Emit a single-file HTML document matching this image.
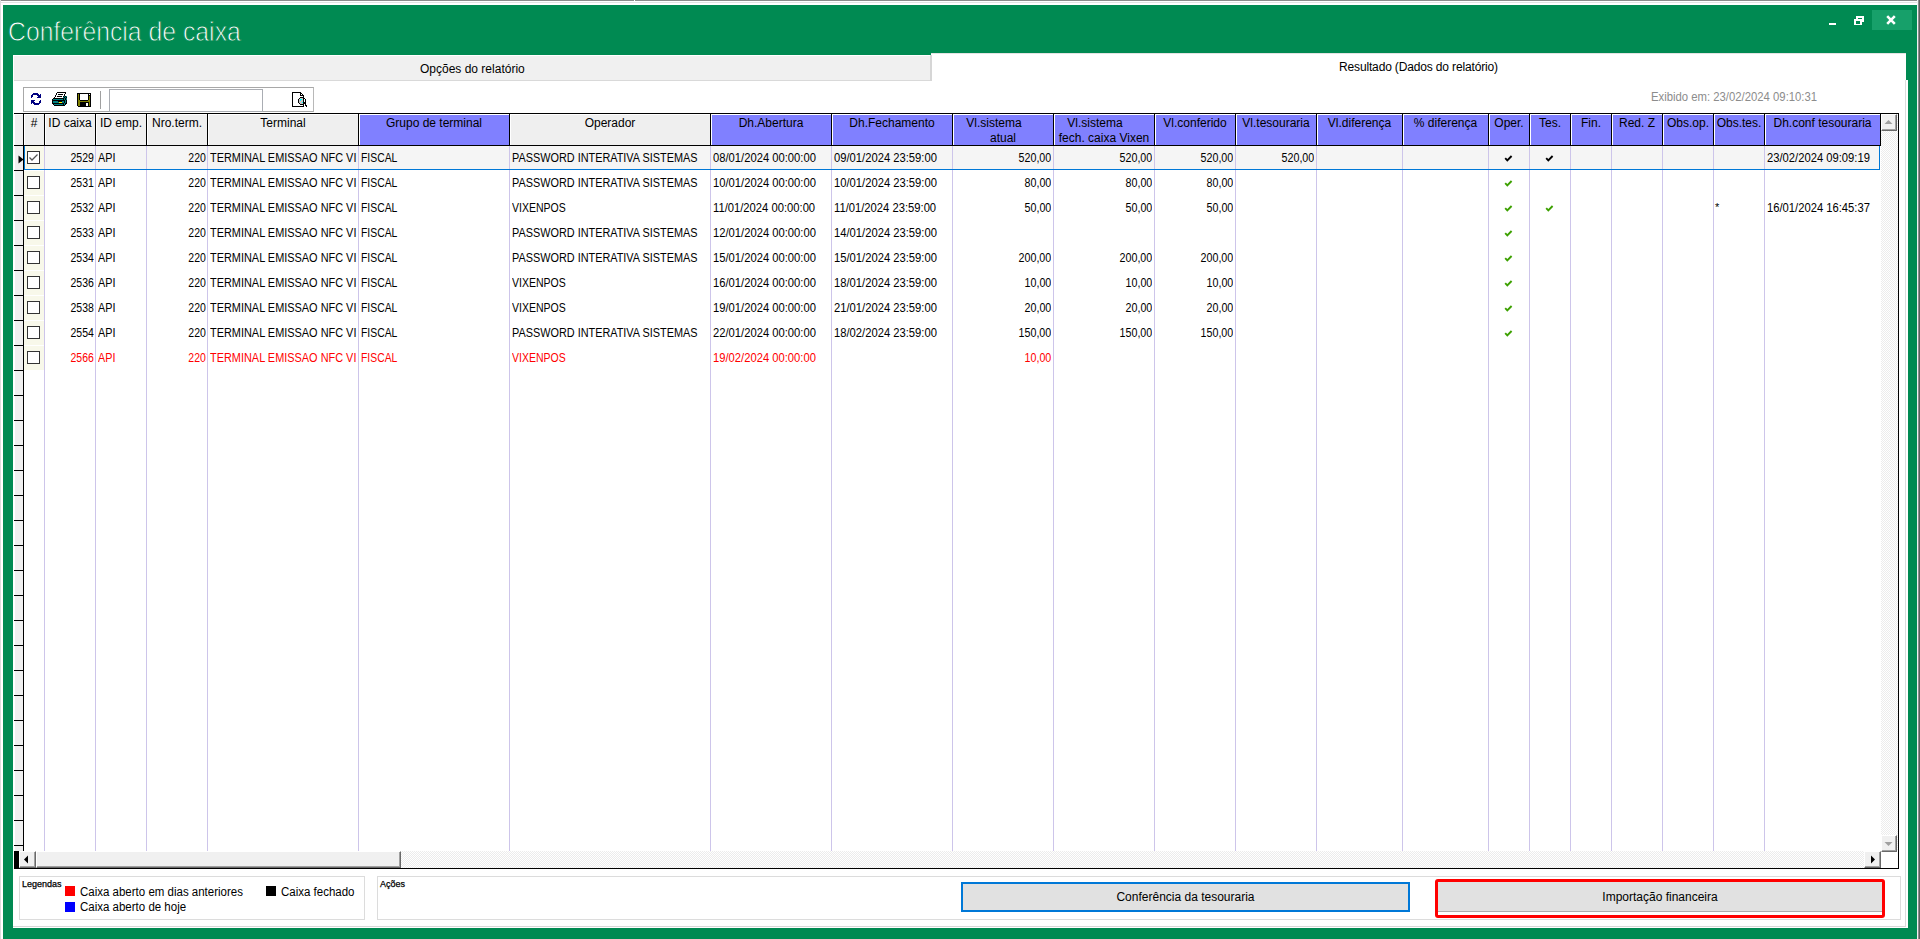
<!DOCTYPE html>
<html><head><meta charset="utf-8"><title>Conferência de caixa</title>
<style>
*{margin:0;padding:0;box-sizing:border-box}
html,body{width:1920px;height:939px;overflow:hidden;background:#fff;font-family:"Liberation Sans", sans-serif;}
.a{position:absolute}
.t{position:absolute;white-space:nowrap;font-size:12px;line-height:14px;color:#000}
.d{position:absolute;white-space:nowrap;font-size:12.5px;line-height:14px;color:#000;transform-origin:0 0}
.dr{position:absolute;white-space:nowrap;font-size:12.5px;line-height:14px;color:#000;transform-origin:100% 0}
.red{color:#f00}
.hd{position:absolute;white-space:nowrap;font-size:12px;line-height:15px;color:#000;text-align:center}
.dith{background-color:#fff;background-image:linear-gradient(45deg,#ececec 25%,transparent 25%,transparent 75%,#ececec 75%),linear-gradient(45deg,#ececec 25%,transparent 25%,transparent 75%,#ececec 75%);background-size:2px 2px;background-position:0 0,1px 1px}
</style></head>
<body>
<div class="a" style="left:0px;top:0px;width:1920px;height:1px;background:#8c8c8c;"></div>
<div class="a" style="left:634px;top:0px;width:1px;height:1px;background:#fff;"></div>
<div class="a" style="left:0px;top:2px;width:1920px;height:1px;background:#e4e4e4;"></div>
<div class="a" style="left:0px;top:0px;width:1px;height:939px;background:#dcdcdc;"></div>
<div class="a" style="left:3px;top:5px;width:1914px;height:934px;background:#008a52;"></div>
<div class="a" style="left:1917px;top:0px;width:1px;height:939px;background:#f2f2f2;"></div>
<div class="a" style="left:1918px;top:0px;width:1px;height:939px;background:#8f8f8f;"></div>
<div class="a" style="left:1919px;top:0px;width:1px;height:939px;background:#5f5f5f;"></div>
<div class="t" style="left:8px;top:14px;font-size:28px;line-height:36px;color:#fff;transform:scaleX(0.885);transform-origin:0 0;-webkit-text-stroke:0.9px #008a52">Conferência de caixa</div>
<div class="a" style="left:1872px;top:10px;width:40px;height:20px;background:#17a06a;"></div>
<svg class="a" style="left:1820px;top:10px" width="100" height="24" viewBox="0 0 100 24" shape-rendering="crispEdges"><rect x="9" y="13" width="7" height="2" fill="#fff"/><rect x="36" y="6" width="8" height="6" fill="#fff"/><rect x="38" y="8" width="4" height="1" fill="#008a52"/><rect x="34" y="9" width="8" height="6" fill="#fff"/><rect x="36" y="11" width="4" height="3" fill="#008a52"/></svg>
<svg class="a" style="left:1886px;top:15px" width="10" height="10" viewBox="0 0 10 10"><path d="M1.2 1.2 L8.8 8.8 M8.8 1.2 L1.2 8.8" stroke="#fff" stroke-width="2.6"/></svg>
<div class="a" style="left:931px;top:53px;width:975px;height:28px;background:#fff;"></div>
<div class="a" style="left:13px;top:80px;width:1895px;height:848px;background:#fff;"></div>
<div class="a" style="left:1905px;top:80px;width:1px;height:847px;background:#dcdcdc;"></div>
<div class="a" style="left:13px;top:926px;width:1893px;height:1px;background:#d8d8d8;"></div>
<div class="a" style="left:13px;top:55px;width:918px;height:26px;background:#f0f0f0;border-top:1px solid #fff;border-left:1px solid #fff"></div>
<div class="a" style="left:14px;top:80px;width:917px;height:1px;background:#d9d9d9;"></div>
<div class="a" style="left:930px;top:55px;width:2px;height:26px;background:#d6d6d6;"></div>
<div class="a" style="left:931px;top:53px;width:975px;height:1px;background:#e3e3e3;"></div>
<div class="t" style="left:420px;top:62px">Opções do relatório</div>
<div class="t" style="left:1339px;top:60px;letter-spacing:-0.15px">Resultado (Dados do relatório)</div>
<div class="a" style="left:23px;top:87px;width:291px;height:25px;background:#fff;border:1px solid #a8a8a8;border-right:1px solid #b8b8b8"></div>
<div class="a" style="left:100px;top:91px;width:1px;height:18px;background:#a0a0a0;"></div>
<div class="a" style="left:109px;top:89px;width:154px;height:23px;background:#fff;border:1px solid #aaadb3"></div>
<svg class="a" style="left:28px;top:90px" width="14" height="15" viewBox="0 0 14 15" shape-rendering="crispEdges"><path d="M5 3h5v1h-5zM4 4h7v1h-7zM12 4h1v1h-1zM3 5h2v1h-2zM9 5h4v1h-4zM3 6h2v1h-2zM10 6h3v1h-3zM3 7h1v1h-1zM9 7h4v1h-4zM3 10h4v1h-4zM12 10h1v1h-1zM3 11h3v1h-3zM11 11h2v1h-2zM3 12h4v1h-4zM11 12h2v1h-2zM3 13h1v1h-1zM5 13h7v1h-7zM6 14h5v1h-5z" fill="#000080"/></svg>
<svg class="a" style="left:50px;top:89px" width="18" height="17" viewBox="0 0 18 17" shape-rendering="crispEdges"><path d="M7 3h9v1h-9zM6 4h1v1h-1zM15 4h1v1h-1zM6 5h1v1h-1zM8 5h5v1h-5zM14 5h1v1h-1zM5 6h1v1h-1zM14 6h1v1h-1zM5 7h1v1h-1zM7 7h5v1h-5zM13 7h1v1h-1zM15 7h1v1h-1zM4 8h1v1h-1zM14 8h1v1h-1zM16 8h1v1h-1zM3 9h11v1h-11zM15 9h1v1h-1zM2 10h1v1h-1zM13 10h1v1h-1zM15 10h1v1h-1zM2 11h13v1h-13zM16 11h1v1h-1zM2 12h1v1h-1zM8 12h4v1h-4zM14 12h1v1h-1zM16 12h1v1h-1zM2 13h1v1h-1zM14 13h1v1h-1zM16 13h1v1h-1zM2 14h12v1h-12zM15 14h2v1h-2zM3 15h1v1h-1zM13 15h1v1h-1zM15 15h1v1h-1zM4 16h11v1h-11z" fill="#000"/><path d="M7 4h8v1h-8zM7 5h1v1h-1zM13 5h1v1h-1zM6 6h8v1h-8zM6 7h1v1h-1zM12 7h1v1h-1zM5 8h8v1h-8z" fill="#fff"/><path d="M14 7h1v1h-1zM16 7h1v1h-1zM13 8h1v1h-1zM15 8h1v1h-1zM14 9h1v1h-1zM16 9h1v1h-1zM3 10h10v1h-10zM14 10h1v1h-1zM16 10h1v1h-1zM15 11h1v1h-1zM3 12h5v1h-5zM12 12h2v1h-2zM15 12h1v1h-1zM3 13h6v1h-6zM12 13h2v1h-2zM15 13h1v1h-1zM14 14h1v1h-1zM4 15h9v1h-9zM14 15h1v1h-1z" fill="#008080"/><path d="M9 13h3v1h-3z" fill="#ffff00"/></svg>
<svg class="a" style="left:74px;top:90px" width="18" height="17" viewBox="0 0 18 17" shape-rendering="crispEdges"><path d="M3 3h14v1h-14zM3 4h1v1h-1zM5 4h1v1h-1zM14 4h1v1h-1zM16 4h1v1h-1zM3 5h1v1h-1zM5 5h1v1h-1zM14 5h3v1h-3zM3 6h1v1h-1zM5 6h1v1h-1zM14 6h1v1h-1zM16 6h1v1h-1zM3 7h1v1h-1zM5 7h1v1h-1zM14 7h1v1h-1zM16 7h1v1h-1zM3 8h1v1h-1zM5 8h1v1h-1zM14 8h1v1h-1zM16 8h1v1h-1zM3 9h1v1h-1zM5 9h1v1h-1zM14 9h1v1h-1zM16 9h1v1h-1zM3 10h1v1h-1zM6 10h8v1h-8zM16 10h1v1h-1zM3 11h1v1h-1zM16 11h1v1h-1zM3 12h1v1h-1zM6 12h9v1h-9zM16 12h1v1h-1zM3 13h1v1h-1zM6 13h6v1h-6zM14 13h1v1h-1zM16 13h1v1h-1zM3 14h1v1h-1zM6 14h6v1h-6zM14 14h1v1h-1zM16 14h1v1h-1zM3 15h1v1h-1zM6 15h6v1h-6zM14 15h1v1h-1zM16 15h1v1h-1zM4 16h13v1h-13z" fill="#000"/><path d="M4 4h1v1h-1zM4 5h1v1h-1zM4 6h1v1h-1zM15 6h1v1h-1zM4 7h1v1h-1zM15 7h1v1h-1zM4 8h1v1h-1zM15 8h1v1h-1zM4 9h1v1h-1zM15 9h1v1h-1zM4 10h2v1h-2zM14 10h2v1h-2zM4 11h12v1h-12zM4 12h2v1h-2zM15 12h1v1h-1zM4 13h2v1h-2zM15 13h1v1h-1zM4 14h2v1h-2zM15 14h1v1h-1zM4 15h2v1h-2zM15 15h1v1h-1z" fill="#808000"/><path d="M6 4h8v1h-8zM15 4h1v1h-1zM6 5h8v1h-8zM6 6h8v1h-8zM6 7h8v1h-8zM6 8h8v1h-8zM6 9h8v1h-8zM12 13h2v1h-2zM12 14h2v1h-2zM12 15h2v1h-2z" fill="#fff"/></svg>
<svg class="a" style="left:290px;top:90px" width="18" height="17" viewBox="0 0 18 17" shape-rendering="crispEdges"><path d="M2 2h9v1h-9zM2 3h1v1h-1zM10 3h2v1h-2zM2 4h1v1h-1zM10 4h1v1h-1zM12 4h1v1h-1zM2 5h1v1h-1zM10 5h4v1h-4zM2 6h1v1h-1zM13 6h1v1h-1zM2 7h1v1h-1zM10 7h4v1h-4zM2 8h1v1h-1zM9 8h1v1h-1zM13 8h2v1h-2zM2 9h1v1h-1zM8 9h1v1h-1zM13 9h1v1h-1zM15 9h1v1h-1zM2 10h1v1h-1zM8 10h1v1h-1zM13 10h1v1h-1zM15 10h1v1h-1zM2 11h1v1h-1zM8 11h1v1h-1zM13 11h1v1h-1zM15 11h1v1h-1zM2 12h1v1h-1zM8 12h1v1h-1zM13 12h3v1h-3zM2 13h1v1h-1zM9 13h1v1h-1zM13 13h3v1h-3zM2 14h1v1h-1zM10 14h4v1h-4zM15 14h1v1h-1zM2 15h1v1h-1zM13 15h1v1h-1zM15 15h2v1h-2zM2 16h12v1h-12zM16 16h1v1h-1z" fill="#000"/><path d="M3 3h7v1h-7zM3 4h7v1h-7zM11 4h1v1h-1zM3 5h7v1h-7zM3 6h10v1h-10zM3 7h7v1h-7zM3 8h6v1h-6zM3 9h5v1h-5zM14 9h1v1h-1zM3 10h5v1h-5zM14 10h1v1h-1zM3 11h5v1h-5zM14 11h1v1h-1zM3 12h5v1h-5zM3 13h6v1h-6zM3 14h7v1h-7zM3 15h10v1h-10z" fill="#fff"/><path d="M10 8h3v1h-3zM9 9h1v1h-1zM12 9h1v1h-1zM9 10h1v1h-1zM11 10h2v1h-2zM9 11h4v1h-4zM9 12h3v1h-3zM10 13h3v1h-3z" fill="#c8c8c8"/><path d="M10 9h2v1h-2zM10 10h1v1h-1zM12 12h1v1h-1z" fill="#00ffff"/></svg>
<div class="t" style="left:1651px;top:90px;color:#8c8c8c;transform:scaleX(0.943);transform-origin:0 0">Exibido em: 23/02/2024 09:10:31</div>
<div class="a" style="left:14px;top:113px;width:1885px;height:1px;background:#000;"></div>
<div class="a" style="left:14px;top:114px;width:9px;height:31px;background:#efefef;border-top:1px solid #fff;border-left:1px solid #fff"></div>
<div class="a" style="left:23px;top:113px;width:1px;height:738px;background:#000;"></div>
<div class="a" style="left:24px;top:114px;width:20px;height:31px;background:#efefef;border-top:1px solid #fff;border-left:1px solid #fff"></div>
<div class="a" style="left:44px;top:113px;width:1px;height:33px;background:#000;"></div>
<div class="hd" style="left:4px;top:116px;width:60px">#</div>
<div class="a" style="left:45px;top:114px;width:50px;height:31px;background:#efefef;border-top:1px solid #fff;border-left:1px solid #fff"></div>
<div class="a" style="left:95px;top:113px;width:1px;height:33px;background:#000;"></div>
<div class="hd" style="left:25px;top:116px;width:90px">ID caixa</div>
<div class="a" style="left:96px;top:114px;width:50px;height:31px;background:#efefef;border-top:1px solid #fff;border-left:1px solid #fff"></div>
<div class="a" style="left:146px;top:113px;width:1px;height:33px;background:#000;"></div>
<div class="hd" style="left:76px;top:116px;width:90px">ID emp.</div>
<div class="a" style="left:147px;top:114px;width:60px;height:31px;background:#efefef;border-top:1px solid #fff;border-left:1px solid #fff"></div>
<div class="a" style="left:207px;top:113px;width:1px;height:33px;background:#000;"></div>
<div class="hd" style="left:127px;top:116px;width:100px">Nro.term.</div>
<div class="a" style="left:208px;top:114px;width:150px;height:31px;background:#efefef;border-top:1px solid #fff;border-left:1px solid #fff"></div>
<div class="a" style="left:358px;top:113px;width:1px;height:33px;background:#000;"></div>
<div class="hd" style="left:188px;top:116px;width:190px">Terminal</div>
<div class="a" style="left:359px;top:114px;width:150px;height:31px;background:#8080ff;border-top:1px solid #fff;border-left:1px solid #fff"></div>
<div class="a" style="left:509px;top:113px;width:1px;height:33px;background:#000;"></div>
<div class="hd" style="left:339px;top:116px;width:190px">Grupo de terminal</div>
<div class="a" style="left:510px;top:114px;width:200px;height:31px;background:#efefef;border-top:1px solid #fff;border-left:1px solid #fff"></div>
<div class="a" style="left:710px;top:113px;width:1px;height:33px;background:#000;"></div>
<div class="hd" style="left:490px;top:116px;width:240px">Operador</div>
<div class="a" style="left:711px;top:114px;width:120px;height:31px;background:#8080ff;border-top:1px solid #fff;border-left:1px solid #fff"></div>
<div class="a" style="left:831px;top:113px;width:1px;height:33px;background:#000;"></div>
<div class="hd" style="left:691px;top:116px;width:160px">Dh.Abertura</div>
<div class="a" style="left:832px;top:114px;width:120px;height:31px;background:#8080ff;border-top:1px solid #fff;border-left:1px solid #fff"></div>
<div class="a" style="left:952px;top:113px;width:1px;height:33px;background:#000;"></div>
<div class="hd" style="left:812px;top:116px;width:160px">Dh.Fechamento</div>
<div class="a" style="left:953px;top:114px;width:100px;height:31px;background:#8080ff;border-top:1px solid #fff;border-left:1px solid #fff"></div>
<div class="a" style="left:1053px;top:113px;width:1px;height:33px;background:#000;"></div>
<div class="hd" style="left:924px;top:116px;width:140px">Vl.sistema</div>
<div class="hd" style="left:933px;top:131px;width:140px">atual</div>
<div class="a" style="left:1054px;top:114px;width:100px;height:31px;background:#8080ff;border-top:1px solid #fff;border-left:1px solid #fff"></div>
<div class="a" style="left:1154px;top:113px;width:1px;height:33px;background:#000;"></div>
<div class="hd" style="left:1025px;top:116px;width:140px">Vl.sistema</div>
<div class="hd" style="left:1034px;top:131px;width:140px">fech. caixa Vixen</div>
<div class="a" style="left:1155px;top:114px;width:80px;height:31px;background:#8080ff;border-top:1px solid #fff;border-left:1px solid #fff"></div>
<div class="a" style="left:1235px;top:113px;width:1px;height:33px;background:#000;"></div>
<div class="hd" style="left:1135px;top:116px;width:120px">Vl.conferido</div>
<div class="a" style="left:1236px;top:114px;width:80px;height:31px;background:#8080ff;border-top:1px solid #fff;border-left:1px solid #fff"></div>
<div class="a" style="left:1316px;top:113px;width:1px;height:33px;background:#000;"></div>
<div class="hd" style="left:1216px;top:116px;width:120px">Vl.tesouraria</div>
<div class="a" style="left:1317px;top:114px;width:85px;height:31px;background:#8080ff;border-top:1px solid #fff;border-left:1px solid #fff"></div>
<div class="a" style="left:1402px;top:113px;width:1px;height:33px;background:#000;"></div>
<div class="hd" style="left:1297px;top:116px;width:125px">Vl.diferença</div>
<div class="a" style="left:1403px;top:114px;width:85px;height:31px;background:#8080ff;border-top:1px solid #fff;border-left:1px solid #fff"></div>
<div class="a" style="left:1488px;top:113px;width:1px;height:33px;background:#000;"></div>
<div class="hd" style="left:1383px;top:116px;width:125px">% diferença</div>
<div class="a" style="left:1489px;top:114px;width:40px;height:31px;background:#8080ff;border-top:1px solid #fff;border-left:1px solid #fff"></div>
<div class="a" style="left:1529px;top:113px;width:1px;height:33px;background:#000;"></div>
<div class="hd" style="left:1469px;top:116px;width:80px">Oper.</div>
<div class="a" style="left:1530px;top:114px;width:40px;height:31px;background:#8080ff;border-top:1px solid #fff;border-left:1px solid #fff"></div>
<div class="a" style="left:1570px;top:113px;width:1px;height:33px;background:#000;"></div>
<div class="hd" style="left:1510px;top:116px;width:80px">Tes.</div>
<div class="a" style="left:1571px;top:114px;width:40px;height:31px;background:#8080ff;border-top:1px solid #fff;border-left:1px solid #fff"></div>
<div class="a" style="left:1611px;top:113px;width:1px;height:33px;background:#000;"></div>
<div class="hd" style="left:1551px;top:116px;width:80px">Fin.</div>
<div class="a" style="left:1612px;top:114px;width:50px;height:31px;background:#8080ff;border-top:1px solid #fff;border-left:1px solid #fff"></div>
<div class="a" style="left:1662px;top:113px;width:1px;height:33px;background:#000;"></div>
<div class="hd" style="left:1592px;top:116px;width:90px">Red. Z</div>
<div class="a" style="left:1663px;top:114px;width:50px;height:31px;background:#8080ff;border-top:1px solid #fff;border-left:1px solid #fff"></div>
<div class="a" style="left:1713px;top:113px;width:1px;height:33px;background:#000;"></div>
<div class="hd" style="left:1643px;top:116px;width:90px">Obs.op.</div>
<div class="a" style="left:1714px;top:114px;width:50px;height:31px;background:#8080ff;border-top:1px solid #fff;border-left:1px solid #fff"></div>
<div class="a" style="left:1764px;top:113px;width:1px;height:33px;background:#000;"></div>
<div class="hd" style="left:1694px;top:116px;width:90px">Obs.tes.</div>
<div class="a" style="left:1765px;top:114px;width:115px;height:31px;background:#8080ff;border-top:1px solid #fff;border-left:1px solid #fff"></div>
<div class="a" style="left:1880px;top:113px;width:1px;height:33px;background:#000;"></div>
<div class="hd" style="left:1745px;top:116px;width:155px">Dh.conf tesouraria</div>
<div class="a" style="left:14px;top:145px;width:1867px;height:1px;background:#000;"></div>
<div class="a" style="left:15px;top:146px;width:8px;height:705px;background:#efefef;"></div>
<div class="a" style="left:14px;top:170px;width:9px;height:1px;background:#000;"></div>
<div class="a" style="left:14px;top:195px;width:9px;height:1px;background:#000;"></div>
<div class="a" style="left:14px;top:220px;width:9px;height:1px;background:#000;"></div>
<div class="a" style="left:14px;top:245px;width:9px;height:1px;background:#000;"></div>
<div class="a" style="left:14px;top:270px;width:9px;height:1px;background:#000;"></div>
<div class="a" style="left:14px;top:295px;width:9px;height:1px;background:#000;"></div>
<div class="a" style="left:14px;top:320px;width:9px;height:1px;background:#000;"></div>
<div class="a" style="left:14px;top:345px;width:9px;height:1px;background:#000;"></div>
<div class="a" style="left:14px;top:370px;width:9px;height:1px;background:#000;"></div>
<div class="a" style="left:14px;top:395px;width:9px;height:1px;background:#000;"></div>
<div class="a" style="left:14px;top:420px;width:9px;height:1px;background:#000;"></div>
<div class="a" style="left:14px;top:445px;width:9px;height:1px;background:#000;"></div>
<div class="a" style="left:14px;top:470px;width:9px;height:1px;background:#000;"></div>
<div class="a" style="left:14px;top:495px;width:9px;height:1px;background:#000;"></div>
<div class="a" style="left:14px;top:520px;width:9px;height:1px;background:#000;"></div>
<div class="a" style="left:14px;top:545px;width:9px;height:1px;background:#000;"></div>
<div class="a" style="left:14px;top:570px;width:9px;height:1px;background:#000;"></div>
<div class="a" style="left:14px;top:595px;width:9px;height:1px;background:#000;"></div>
<div class="a" style="left:14px;top:620px;width:9px;height:1px;background:#000;"></div>
<div class="a" style="left:14px;top:645px;width:9px;height:1px;background:#000;"></div>
<div class="a" style="left:14px;top:670px;width:9px;height:1px;background:#000;"></div>
<div class="a" style="left:14px;top:695px;width:9px;height:1px;background:#000;"></div>
<div class="a" style="left:14px;top:720px;width:9px;height:1px;background:#000;"></div>
<div class="a" style="left:14px;top:745px;width:9px;height:1px;background:#000;"></div>
<div class="a" style="left:14px;top:770px;width:9px;height:1px;background:#000;"></div>
<div class="a" style="left:14px;top:795px;width:9px;height:1px;background:#000;"></div>
<div class="a" style="left:14px;top:820px;width:9px;height:1px;background:#000;"></div>
<div class="a" style="left:14px;top:845px;width:9px;height:1px;background:#000;"></div>
<div class="a" style="left:24px;top:146px;width:1856px;height:24px;background:#f5f5f5;"></div>
<div class="a" style="left:44px;top:146px;width:1px;height:705px;background:#cdc5ea;"></div>
<div class="a" style="left:95px;top:146px;width:1px;height:705px;background:#cdc5ea;"></div>
<div class="a" style="left:146px;top:146px;width:1px;height:705px;background:#cdc5ea;"></div>
<div class="a" style="left:207px;top:146px;width:1px;height:705px;background:#cdc5ea;"></div>
<div class="a" style="left:358px;top:146px;width:1px;height:705px;background:#cdc5ea;"></div>
<div class="a" style="left:509px;top:146px;width:1px;height:705px;background:#cdc5ea;"></div>
<div class="a" style="left:710px;top:146px;width:1px;height:705px;background:#cdc5ea;"></div>
<div class="a" style="left:831px;top:146px;width:1px;height:705px;background:#cdc5ea;"></div>
<div class="a" style="left:952px;top:146px;width:1px;height:705px;background:#cdc5ea;"></div>
<div class="a" style="left:1053px;top:146px;width:1px;height:705px;background:#cdc5ea;"></div>
<div class="a" style="left:1154px;top:146px;width:1px;height:705px;background:#cdc5ea;"></div>
<div class="a" style="left:1235px;top:146px;width:1px;height:705px;background:#cdc5ea;"></div>
<div class="a" style="left:1316px;top:146px;width:1px;height:705px;background:#cdc5ea;"></div>
<div class="a" style="left:1402px;top:146px;width:1px;height:705px;background:#cdc5ea;"></div>
<div class="a" style="left:1488px;top:146px;width:1px;height:705px;background:#cdc5ea;"></div>
<div class="a" style="left:1529px;top:146px;width:1px;height:705px;background:#cdc5ea;"></div>
<div class="a" style="left:1570px;top:146px;width:1px;height:705px;background:#cdc5ea;"></div>
<div class="a" style="left:1611px;top:146px;width:1px;height:705px;background:#cdc5ea;"></div>
<div class="a" style="left:1662px;top:146px;width:1px;height:705px;background:#cdc5ea;"></div>
<div class="a" style="left:1713px;top:146px;width:1px;height:705px;background:#cdc5ea;"></div>
<div class="a" style="left:1764px;top:146px;width:1px;height:705px;background:#cdc5ea;"></div>
<div class="a" style="left:24px;top:146px;width:20px;height:24px;background:#f8f8ea;"></div>
<div class="a" style="left:27px;top:151px;width:13px;height:13px;border:1px solid #333;background:#fff"></div>
<svg class="a" style="left:27px;top:151px" width="13" height="13" viewBox="0 0 13 13"><path d="M2.5 6.5 L5 9 L10.5 3.5" fill="none" stroke="#555" stroke-width="1.3"/></svg>
<div class="a" style="left:45px;top:146px;width:49px;height:24px;overflow:hidden"><div class="dr " style="right:0;top:5px;transform:scaleX(0.8400)">2529</div></div>
<div class="a" style="left:96px;top:146px;width:50px;height:24px;overflow:hidden"><div class="d " style="left:2px;top:5px;transform:scaleX(0.8640)">API</div></div>
<div class="a" style="left:147px;top:146px;width:59px;height:24px;overflow:hidden"><div class="dr " style="right:0;top:5px;transform:scaleX(0.8400)">220</div></div>
<div class="a" style="left:208px;top:146px;width:150px;height:24px;overflow:hidden"><div class="d " style="left:2px;top:5px;transform:scaleX(0.8736)">TERMINAL EMISSAO NFC VI</div></div>
<div class="a" style="left:359px;top:146px;width:150px;height:24px;overflow:hidden"><div class="d " style="left:2px;top:5px;transform:scaleX(0.8304)">FISCAL</div></div>
<div class="a" style="left:510px;top:146px;width:200px;height:24px;overflow:hidden"><div class="d " style="left:2px;top:5px;transform:scaleX(0.8698)">PASSWORD INTERATIVA SISTEMAS</div></div>
<div class="a" style="left:711px;top:146px;width:120px;height:24px;overflow:hidden"><div class="d " style="left:2px;top:5px;transform:scaleX(0.8976)">08/01/2024 00:00:00</div></div>
<div class="a" style="left:832px;top:146px;width:120px;height:24px;overflow:hidden"><div class="d " style="left:2px;top:5px;transform:scaleX(0.8976)">09/01/2024 23:59:00</div></div>
<div class="a" style="left:953px;top:146px;width:98px;height:24px;overflow:hidden"><div class="dr " style="right:0;top:5px;transform:scaleX(0.8544)">520,00</div></div>
<div class="a" style="left:1054px;top:146px;width:98px;height:24px;overflow:hidden"><div class="dr " style="right:0;top:5px;transform:scaleX(0.8544)">520,00</div></div>
<div class="a" style="left:1155px;top:146px;width:78px;height:24px;overflow:hidden"><div class="dr " style="right:0;top:5px;transform:scaleX(0.8544)">520,00</div></div>
<div class="a" style="left:1236px;top:146px;width:78px;height:24px;overflow:hidden"><div class="dr " style="right:0;top:5px;transform:scaleX(0.8544)">520,00</div></div>
<svg class="a" style="left:1504px;top:155px" width="9" height="7" viewBox="0 0 9 7"><path d="M1.2 3.2 L3.3 5.3 L7.6 1" fill="none" stroke="#000" stroke-width="1.9"/></svg>
<svg class="a" style="left:1545px;top:155px" width="9" height="7" viewBox="0 0 9 7"><path d="M1.2 3.2 L3.3 5.3 L7.6 1" fill="none" stroke="#000" stroke-width="1.9"/></svg>
<div class="a" style="left:1765px;top:146px;width:115px;height:24px;overflow:hidden"><div class="d " style="left:2px;top:5px;transform:scaleX(0.8976)">23/02/2024 09:09:19</div></div>
<div class="a" style="left:24px;top:146px;width:1px;height:24px;background:#0078d7;"></div>
<div class="a" style="left:24px;top:169px;width:1856px;height:1px;background:#0078d7;"></div>
<div class="a" style="left:1879px;top:146px;width:1px;height:24px;background:#0078d7;"></div>
<div class="a" style="left:24px;top:171px;width:20px;height:24px;background:#f8f8ea;"></div>
<div class="a" style="left:27px;top:176px;width:13px;height:13px;border:1px solid #333;background:#fff"></div>
<div class="a" style="left:45px;top:171px;width:49px;height:24px;overflow:hidden"><div class="dr " style="right:0;top:5px;transform:scaleX(0.8400)">2531</div></div>
<div class="a" style="left:96px;top:171px;width:50px;height:24px;overflow:hidden"><div class="d " style="left:2px;top:5px;transform:scaleX(0.8640)">API</div></div>
<div class="a" style="left:147px;top:171px;width:59px;height:24px;overflow:hidden"><div class="dr " style="right:0;top:5px;transform:scaleX(0.8400)">220</div></div>
<div class="a" style="left:208px;top:171px;width:150px;height:24px;overflow:hidden"><div class="d " style="left:2px;top:5px;transform:scaleX(0.8736)">TERMINAL EMISSAO NFC VI</div></div>
<div class="a" style="left:359px;top:171px;width:150px;height:24px;overflow:hidden"><div class="d " style="left:2px;top:5px;transform:scaleX(0.8304)">FISCAL</div></div>
<div class="a" style="left:510px;top:171px;width:200px;height:24px;overflow:hidden"><div class="d " style="left:2px;top:5px;transform:scaleX(0.8698)">PASSWORD INTERATIVA SISTEMAS</div></div>
<div class="a" style="left:711px;top:171px;width:120px;height:24px;overflow:hidden"><div class="d " style="left:2px;top:5px;transform:scaleX(0.8976)">10/01/2024 00:00:00</div></div>
<div class="a" style="left:832px;top:171px;width:120px;height:24px;overflow:hidden"><div class="d " style="left:2px;top:5px;transform:scaleX(0.8976)">10/01/2024 23:59:00</div></div>
<div class="a" style="left:953px;top:171px;width:98px;height:24px;overflow:hidden"><div class="dr " style="right:0;top:5px;transform:scaleX(0.8544)">80,00</div></div>
<div class="a" style="left:1054px;top:171px;width:98px;height:24px;overflow:hidden"><div class="dr " style="right:0;top:5px;transform:scaleX(0.8544)">80,00</div></div>
<div class="a" style="left:1155px;top:171px;width:78px;height:24px;overflow:hidden"><div class="dr " style="right:0;top:5px;transform:scaleX(0.8544)">80,00</div></div>
<svg class="a" style="left:1504px;top:180px" width="9" height="7" viewBox="0 0 9 7"><path d="M1.2 3.2 L3.3 5.3 L7.6 1" fill="none" stroke="#3ca000" stroke-width="1.9"/></svg>
<div class="a" style="left:24px;top:196px;width:20px;height:24px;background:#f8f8ea;"></div>
<div class="a" style="left:27px;top:201px;width:13px;height:13px;border:1px solid #333;background:#fff"></div>
<div class="a" style="left:45px;top:196px;width:49px;height:24px;overflow:hidden"><div class="dr " style="right:0;top:5px;transform:scaleX(0.8400)">2532</div></div>
<div class="a" style="left:96px;top:196px;width:50px;height:24px;overflow:hidden"><div class="d " style="left:2px;top:5px;transform:scaleX(0.8640)">API</div></div>
<div class="a" style="left:147px;top:196px;width:59px;height:24px;overflow:hidden"><div class="dr " style="right:0;top:5px;transform:scaleX(0.8400)">220</div></div>
<div class="a" style="left:208px;top:196px;width:150px;height:24px;overflow:hidden"><div class="d " style="left:2px;top:5px;transform:scaleX(0.8736)">TERMINAL EMISSAO NFC VI</div></div>
<div class="a" style="left:359px;top:196px;width:150px;height:24px;overflow:hidden"><div class="d " style="left:2px;top:5px;transform:scaleX(0.8304)">FISCAL</div></div>
<div class="a" style="left:510px;top:196px;width:200px;height:24px;overflow:hidden"><div class="d " style="left:2px;top:5px;transform:scaleX(0.8400)">VIXENPOS</div></div>
<div class="a" style="left:711px;top:196px;width:120px;height:24px;overflow:hidden"><div class="d " style="left:2px;top:5px;transform:scaleX(0.8976)">11/01/2024 00:00:00</div></div>
<div class="a" style="left:832px;top:196px;width:120px;height:24px;overflow:hidden"><div class="d " style="left:2px;top:5px;transform:scaleX(0.8976)">11/01/2024 23:59:00</div></div>
<div class="a" style="left:953px;top:196px;width:98px;height:24px;overflow:hidden"><div class="dr " style="right:0;top:5px;transform:scaleX(0.8544)">50,00</div></div>
<div class="a" style="left:1054px;top:196px;width:98px;height:24px;overflow:hidden"><div class="dr " style="right:0;top:5px;transform:scaleX(0.8544)">50,00</div></div>
<div class="a" style="left:1155px;top:196px;width:78px;height:24px;overflow:hidden"><div class="dr " style="right:0;top:5px;transform:scaleX(0.8544)">50,00</div></div>
<svg class="a" style="left:1504px;top:205px" width="9" height="7" viewBox="0 0 9 7"><path d="M1.2 3.2 L3.3 5.3 L7.6 1" fill="none" stroke="#3ca000" stroke-width="1.9"/></svg>
<svg class="a" style="left:1545px;top:205px" width="9" height="7" viewBox="0 0 9 7"><path d="M1.2 3.2 L3.3 5.3 L7.6 1" fill="none" stroke="#3ca000" stroke-width="1.9"/></svg>
<div class="d" style="left:1715px;top:200px;font-size:11px">*</div>
<div class="a" style="left:1765px;top:196px;width:115px;height:24px;overflow:hidden"><div class="d " style="left:2px;top:5px;transform:scaleX(0.8976)">16/01/2024 16:45:37</div></div>
<div class="a" style="left:24px;top:221px;width:20px;height:24px;background:#f8f8ea;"></div>
<div class="a" style="left:27px;top:226px;width:13px;height:13px;border:1px solid #333;background:#fff"></div>
<div class="a" style="left:45px;top:221px;width:49px;height:24px;overflow:hidden"><div class="dr " style="right:0;top:5px;transform:scaleX(0.8400)">2533</div></div>
<div class="a" style="left:96px;top:221px;width:50px;height:24px;overflow:hidden"><div class="d " style="left:2px;top:5px;transform:scaleX(0.8640)">API</div></div>
<div class="a" style="left:147px;top:221px;width:59px;height:24px;overflow:hidden"><div class="dr " style="right:0;top:5px;transform:scaleX(0.8400)">220</div></div>
<div class="a" style="left:208px;top:221px;width:150px;height:24px;overflow:hidden"><div class="d " style="left:2px;top:5px;transform:scaleX(0.8736)">TERMINAL EMISSAO NFC VI</div></div>
<div class="a" style="left:359px;top:221px;width:150px;height:24px;overflow:hidden"><div class="d " style="left:2px;top:5px;transform:scaleX(0.8304)">FISCAL</div></div>
<div class="a" style="left:510px;top:221px;width:200px;height:24px;overflow:hidden"><div class="d " style="left:2px;top:5px;transform:scaleX(0.8698)">PASSWORD INTERATIVA SISTEMAS</div></div>
<div class="a" style="left:711px;top:221px;width:120px;height:24px;overflow:hidden"><div class="d " style="left:2px;top:5px;transform:scaleX(0.8976)">12/01/2024 00:00:00</div></div>
<div class="a" style="left:832px;top:221px;width:120px;height:24px;overflow:hidden"><div class="d " style="left:2px;top:5px;transform:scaleX(0.8976)">14/01/2024 23:59:00</div></div>
<svg class="a" style="left:1504px;top:230px" width="9" height="7" viewBox="0 0 9 7"><path d="M1.2 3.2 L3.3 5.3 L7.6 1" fill="none" stroke="#3ca000" stroke-width="1.9"/></svg>
<div class="a" style="left:24px;top:246px;width:20px;height:24px;background:#f8f8ea;"></div>
<div class="a" style="left:27px;top:251px;width:13px;height:13px;border:1px solid #333;background:#fff"></div>
<div class="a" style="left:45px;top:246px;width:49px;height:24px;overflow:hidden"><div class="dr " style="right:0;top:5px;transform:scaleX(0.8400)">2534</div></div>
<div class="a" style="left:96px;top:246px;width:50px;height:24px;overflow:hidden"><div class="d " style="left:2px;top:5px;transform:scaleX(0.8640)">API</div></div>
<div class="a" style="left:147px;top:246px;width:59px;height:24px;overflow:hidden"><div class="dr " style="right:0;top:5px;transform:scaleX(0.8400)">220</div></div>
<div class="a" style="left:208px;top:246px;width:150px;height:24px;overflow:hidden"><div class="d " style="left:2px;top:5px;transform:scaleX(0.8736)">TERMINAL EMISSAO NFC VI</div></div>
<div class="a" style="left:359px;top:246px;width:150px;height:24px;overflow:hidden"><div class="d " style="left:2px;top:5px;transform:scaleX(0.8304)">FISCAL</div></div>
<div class="a" style="left:510px;top:246px;width:200px;height:24px;overflow:hidden"><div class="d " style="left:2px;top:5px;transform:scaleX(0.8698)">PASSWORD INTERATIVA SISTEMAS</div></div>
<div class="a" style="left:711px;top:246px;width:120px;height:24px;overflow:hidden"><div class="d " style="left:2px;top:5px;transform:scaleX(0.8976)">15/01/2024 00:00:00</div></div>
<div class="a" style="left:832px;top:246px;width:120px;height:24px;overflow:hidden"><div class="d " style="left:2px;top:5px;transform:scaleX(0.8976)">15/01/2024 23:59:00</div></div>
<div class="a" style="left:953px;top:246px;width:98px;height:24px;overflow:hidden"><div class="dr " style="right:0;top:5px;transform:scaleX(0.8544)">200,00</div></div>
<div class="a" style="left:1054px;top:246px;width:98px;height:24px;overflow:hidden"><div class="dr " style="right:0;top:5px;transform:scaleX(0.8544)">200,00</div></div>
<div class="a" style="left:1155px;top:246px;width:78px;height:24px;overflow:hidden"><div class="dr " style="right:0;top:5px;transform:scaleX(0.8544)">200,00</div></div>
<svg class="a" style="left:1504px;top:255px" width="9" height="7" viewBox="0 0 9 7"><path d="M1.2 3.2 L3.3 5.3 L7.6 1" fill="none" stroke="#3ca000" stroke-width="1.9"/></svg>
<div class="a" style="left:24px;top:271px;width:20px;height:24px;background:#f8f8ea;"></div>
<div class="a" style="left:27px;top:276px;width:13px;height:13px;border:1px solid #333;background:#fff"></div>
<div class="a" style="left:45px;top:271px;width:49px;height:24px;overflow:hidden"><div class="dr " style="right:0;top:5px;transform:scaleX(0.8400)">2536</div></div>
<div class="a" style="left:96px;top:271px;width:50px;height:24px;overflow:hidden"><div class="d " style="left:2px;top:5px;transform:scaleX(0.8640)">API</div></div>
<div class="a" style="left:147px;top:271px;width:59px;height:24px;overflow:hidden"><div class="dr " style="right:0;top:5px;transform:scaleX(0.8400)">220</div></div>
<div class="a" style="left:208px;top:271px;width:150px;height:24px;overflow:hidden"><div class="d " style="left:2px;top:5px;transform:scaleX(0.8736)">TERMINAL EMISSAO NFC VI</div></div>
<div class="a" style="left:359px;top:271px;width:150px;height:24px;overflow:hidden"><div class="d " style="left:2px;top:5px;transform:scaleX(0.8304)">FISCAL</div></div>
<div class="a" style="left:510px;top:271px;width:200px;height:24px;overflow:hidden"><div class="d " style="left:2px;top:5px;transform:scaleX(0.8400)">VIXENPOS</div></div>
<div class="a" style="left:711px;top:271px;width:120px;height:24px;overflow:hidden"><div class="d " style="left:2px;top:5px;transform:scaleX(0.8976)">16/01/2024 00:00:00</div></div>
<div class="a" style="left:832px;top:271px;width:120px;height:24px;overflow:hidden"><div class="d " style="left:2px;top:5px;transform:scaleX(0.8976)">18/01/2024 23:59:00</div></div>
<div class="a" style="left:953px;top:271px;width:98px;height:24px;overflow:hidden"><div class="dr " style="right:0;top:5px;transform:scaleX(0.8544)">10,00</div></div>
<div class="a" style="left:1054px;top:271px;width:98px;height:24px;overflow:hidden"><div class="dr " style="right:0;top:5px;transform:scaleX(0.8544)">10,00</div></div>
<div class="a" style="left:1155px;top:271px;width:78px;height:24px;overflow:hidden"><div class="dr " style="right:0;top:5px;transform:scaleX(0.8544)">10,00</div></div>
<svg class="a" style="left:1504px;top:280px" width="9" height="7" viewBox="0 0 9 7"><path d="M1.2 3.2 L3.3 5.3 L7.6 1" fill="none" stroke="#3ca000" stroke-width="1.9"/></svg>
<div class="a" style="left:24px;top:296px;width:20px;height:24px;background:#f8f8ea;"></div>
<div class="a" style="left:27px;top:301px;width:13px;height:13px;border:1px solid #333;background:#fff"></div>
<div class="a" style="left:45px;top:296px;width:49px;height:24px;overflow:hidden"><div class="dr " style="right:0;top:5px;transform:scaleX(0.8400)">2538</div></div>
<div class="a" style="left:96px;top:296px;width:50px;height:24px;overflow:hidden"><div class="d " style="left:2px;top:5px;transform:scaleX(0.8640)">API</div></div>
<div class="a" style="left:147px;top:296px;width:59px;height:24px;overflow:hidden"><div class="dr " style="right:0;top:5px;transform:scaleX(0.8400)">220</div></div>
<div class="a" style="left:208px;top:296px;width:150px;height:24px;overflow:hidden"><div class="d " style="left:2px;top:5px;transform:scaleX(0.8736)">TERMINAL EMISSAO NFC VI</div></div>
<div class="a" style="left:359px;top:296px;width:150px;height:24px;overflow:hidden"><div class="d " style="left:2px;top:5px;transform:scaleX(0.8304)">FISCAL</div></div>
<div class="a" style="left:510px;top:296px;width:200px;height:24px;overflow:hidden"><div class="d " style="left:2px;top:5px;transform:scaleX(0.8400)">VIXENPOS</div></div>
<div class="a" style="left:711px;top:296px;width:120px;height:24px;overflow:hidden"><div class="d " style="left:2px;top:5px;transform:scaleX(0.8976)">19/01/2024 00:00:00</div></div>
<div class="a" style="left:832px;top:296px;width:120px;height:24px;overflow:hidden"><div class="d " style="left:2px;top:5px;transform:scaleX(0.8976)">21/01/2024 23:59:00</div></div>
<div class="a" style="left:953px;top:296px;width:98px;height:24px;overflow:hidden"><div class="dr " style="right:0;top:5px;transform:scaleX(0.8544)">20,00</div></div>
<div class="a" style="left:1054px;top:296px;width:98px;height:24px;overflow:hidden"><div class="dr " style="right:0;top:5px;transform:scaleX(0.8544)">20,00</div></div>
<div class="a" style="left:1155px;top:296px;width:78px;height:24px;overflow:hidden"><div class="dr " style="right:0;top:5px;transform:scaleX(0.8544)">20,00</div></div>
<svg class="a" style="left:1504px;top:305px" width="9" height="7" viewBox="0 0 9 7"><path d="M1.2 3.2 L3.3 5.3 L7.6 1" fill="none" stroke="#3ca000" stroke-width="1.9"/></svg>
<div class="a" style="left:24px;top:321px;width:20px;height:24px;background:#f8f8ea;"></div>
<div class="a" style="left:27px;top:326px;width:13px;height:13px;border:1px solid #333;background:#fff"></div>
<div class="a" style="left:45px;top:321px;width:49px;height:24px;overflow:hidden"><div class="dr " style="right:0;top:5px;transform:scaleX(0.8400)">2554</div></div>
<div class="a" style="left:96px;top:321px;width:50px;height:24px;overflow:hidden"><div class="d " style="left:2px;top:5px;transform:scaleX(0.8640)">API</div></div>
<div class="a" style="left:147px;top:321px;width:59px;height:24px;overflow:hidden"><div class="dr " style="right:0;top:5px;transform:scaleX(0.8400)">220</div></div>
<div class="a" style="left:208px;top:321px;width:150px;height:24px;overflow:hidden"><div class="d " style="left:2px;top:5px;transform:scaleX(0.8736)">TERMINAL EMISSAO NFC VI</div></div>
<div class="a" style="left:359px;top:321px;width:150px;height:24px;overflow:hidden"><div class="d " style="left:2px;top:5px;transform:scaleX(0.8304)">FISCAL</div></div>
<div class="a" style="left:510px;top:321px;width:200px;height:24px;overflow:hidden"><div class="d " style="left:2px;top:5px;transform:scaleX(0.8698)">PASSWORD INTERATIVA SISTEMAS</div></div>
<div class="a" style="left:711px;top:321px;width:120px;height:24px;overflow:hidden"><div class="d " style="left:2px;top:5px;transform:scaleX(0.8976)">22/01/2024 00:00:00</div></div>
<div class="a" style="left:832px;top:321px;width:120px;height:24px;overflow:hidden"><div class="d " style="left:2px;top:5px;transform:scaleX(0.8976)">18/02/2024 23:59:00</div></div>
<div class="a" style="left:953px;top:321px;width:98px;height:24px;overflow:hidden"><div class="dr " style="right:0;top:5px;transform:scaleX(0.8544)">150,00</div></div>
<div class="a" style="left:1054px;top:321px;width:98px;height:24px;overflow:hidden"><div class="dr " style="right:0;top:5px;transform:scaleX(0.8544)">150,00</div></div>
<div class="a" style="left:1155px;top:321px;width:78px;height:24px;overflow:hidden"><div class="dr " style="right:0;top:5px;transform:scaleX(0.8544)">150,00</div></div>
<svg class="a" style="left:1504px;top:330px" width="9" height="7" viewBox="0 0 9 7"><path d="M1.2 3.2 L3.3 5.3 L7.6 1" fill="none" stroke="#3ca000" stroke-width="1.9"/></svg>
<div class="a" style="left:24px;top:346px;width:20px;height:24px;background:#f8f8ea;"></div>
<div class="a" style="left:27px;top:351px;width:13px;height:13px;border:1px solid #333;background:#fff"></div>
<div class="a" style="left:45px;top:346px;width:49px;height:24px;overflow:hidden"><div class="dr red" style="right:0;top:5px;transform:scaleX(0.8400)">2566</div></div>
<div class="a" style="left:96px;top:346px;width:50px;height:24px;overflow:hidden"><div class="d red" style="left:2px;top:5px;transform:scaleX(0.8640)">API</div></div>
<div class="a" style="left:147px;top:346px;width:59px;height:24px;overflow:hidden"><div class="dr red" style="right:0;top:5px;transform:scaleX(0.8400)">220</div></div>
<div class="a" style="left:208px;top:346px;width:150px;height:24px;overflow:hidden"><div class="d red" style="left:2px;top:5px;transform:scaleX(0.8736)">TERMINAL EMISSAO NFC VI</div></div>
<div class="a" style="left:359px;top:346px;width:150px;height:24px;overflow:hidden"><div class="d red" style="left:2px;top:5px;transform:scaleX(0.8304)">FISCAL</div></div>
<div class="a" style="left:510px;top:346px;width:200px;height:24px;overflow:hidden"><div class="d red" style="left:2px;top:5px;transform:scaleX(0.8400)">VIXENPOS</div></div>
<div class="a" style="left:711px;top:346px;width:120px;height:24px;overflow:hidden"><div class="d red" style="left:2px;top:5px;transform:scaleX(0.8976)">19/02/2024 00:00:00</div></div>
<div class="a" style="left:953px;top:346px;width:98px;height:24px;overflow:hidden"><div class="dr red" style="right:0;top:5px;transform:scaleX(0.8544)">10,00</div></div>
<svg class="a" style="left:18px;top:155px" width="6" height="9" viewBox="0 0 6 9"><path d="M0.5 0.5 L5.5 4.5 L0.5 8.5 Z" fill="#000"/></svg>
<div class="a dith" style="left:1881px;top:114px;width:17px;height:737px"></div>
<div class="a" style="left:1881px;top:114px;width:16px;height:17px;background:#f0f0f0;border-top:1px solid #fff;border-left:1px solid #fff;border-right:1px solid #696969;border-bottom:1px solid #696969;box-shadow:inset -1px -1px 0 #a0a0a0"></div>
<svg class="a" style="left:1884px;top:118px" width="9" height="8" viewBox="0 0 9 8"><path d="M0.5 6 L4.5 2 L8.5 6 Z" fill="#a0a0a0"/></svg>
<div class="a" style="left:1881px;top:835px;width:16px;height:17px;background:#f0f0f0;border-top:1px solid #fff;border-left:1px solid #fff;border-right:1px solid #696969;border-bottom:1px solid #696969;box-shadow:inset -1px -1px 0 #a0a0a0"></div>
<svg class="a" style="left:1884px;top:840px" width="9" height="8" viewBox="0 0 9 8"><path d="M0.5 2 L4.5 6 L8.5 2 Z" fill="#a0a0a0"/></svg>
<div class="a" style="left:1898px;top:113px;width:1px;height:756px;background:#000;"></div>
<div class="a" style="left:14px;top:851px;width:5px;height:17px;background:#000;"></div>
<div class="a dith" style="left:19px;top:851px;width:1861px;height:17px"></div>
<div class="a" style="left:19px;top:851px;width:17px;height:17px;background:#f0f0f0;border-top:1px solid #fff;border-left:1px solid #fff;border-right:1px solid #696969;border-bottom:1px solid #696969;box-shadow:inset -1px -1px 0 #a0a0a0"></div>
<svg class="a" style="left:22px;top:855px" width="8" height="9" viewBox="0 0 8 9"><path d="M6 0.5 L2 4.5 L6 8.5 Z" fill="#000"/></svg>
<div class="a" style="left:36px;top:851px;width:365px;height:17px;background:#f0f0f0;border-top:1px solid #fff;border-left:1px solid #fff;border-right:1px solid #696969;border-bottom:1px solid #696969;box-shadow:inset -1px -1px 0 #a0a0a0"></div>
<div class="a" style="left:1864px;top:851px;width:17px;height:17px;background:#f0f0f0;border-top:1px solid #fff;border-left:1px solid #fff;border-right:1px solid #696969;border-bottom:1px solid #696969;box-shadow:inset -1px -1px 0 #a0a0a0"></div>
<svg class="a" style="left:1869px;top:855px" width="8" height="9" viewBox="0 0 8 9"><path d="M2 0.5 L6 4.5 L2 8.5 Z" fill="#000"/></svg>
<div class="a" style="left:1881px;top:852px;width:17px;height:16px;background:#fff;"></div>
<div class="a" style="left:14px;top:868px;width:1885px;height:1px;background:#000;"></div>
<div class="a" style="left:19px;top:876px;width:346px;height:44px;border:1px solid #dcdcdc"></div>
<div class="t" style="left:22px;top:879px;font-size:9px;line-height:11px;-webkit-text-stroke:0.25px #000">Legendas</div>
<div class="a" style="left:65px;top:886px;width:10px;height:10px;background:#ff0000;"></div>
<div class="a" style="left:65px;top:902px;width:10px;height:10px;background:#0000ff;"></div>
<div class="a" style="left:266px;top:886px;width:10px;height:10px;background:#000;"></div>
<div class="t" style="left:80px;top:885px;transform:scaleX(0.958);transform-origin:0 0">Caixa aberto em dias anteriores</div>
<div class="t" style="left:80px;top:900px;transform:scaleX(0.958);transform-origin:0 0">Caixa aberto de hoje</div>
<div class="t" style="left:281px;top:885px;transform:scaleX(0.958);transform-origin:0 0">Caixa fechado</div>
<div class="a" style="left:377px;top:876px;width:1524px;height:44px;border:1px solid #dcdcdc"></div>
<div class="t" style="left:380px;top:879px;font-size:9px;line-height:11px;-webkit-text-stroke:0.25px #000">Ações</div>
<div class="a" style="left:961px;top:882px;width:449px;height:30px;background:#e1e1e1;border:2px solid #0078d7"></div>
<div class="t" style="left:961px;top:890px;width:449px;text-align:center">Conferência da tesouraria</div>
<div class="a" style="left:1435px;top:879px;width:450px;height:39px;border:3px solid #f00;border-radius:3px;background:#fff"></div>
<div class="a" style="left:1438px;top:882px;width:444px;height:30px;background:#e1e1e1;border-bottom:1px solid #adadad"></div>
<div class="t" style="left:1435px;top:890px;width:450px;text-align:center">Importação financeira</div>
</body></html>
